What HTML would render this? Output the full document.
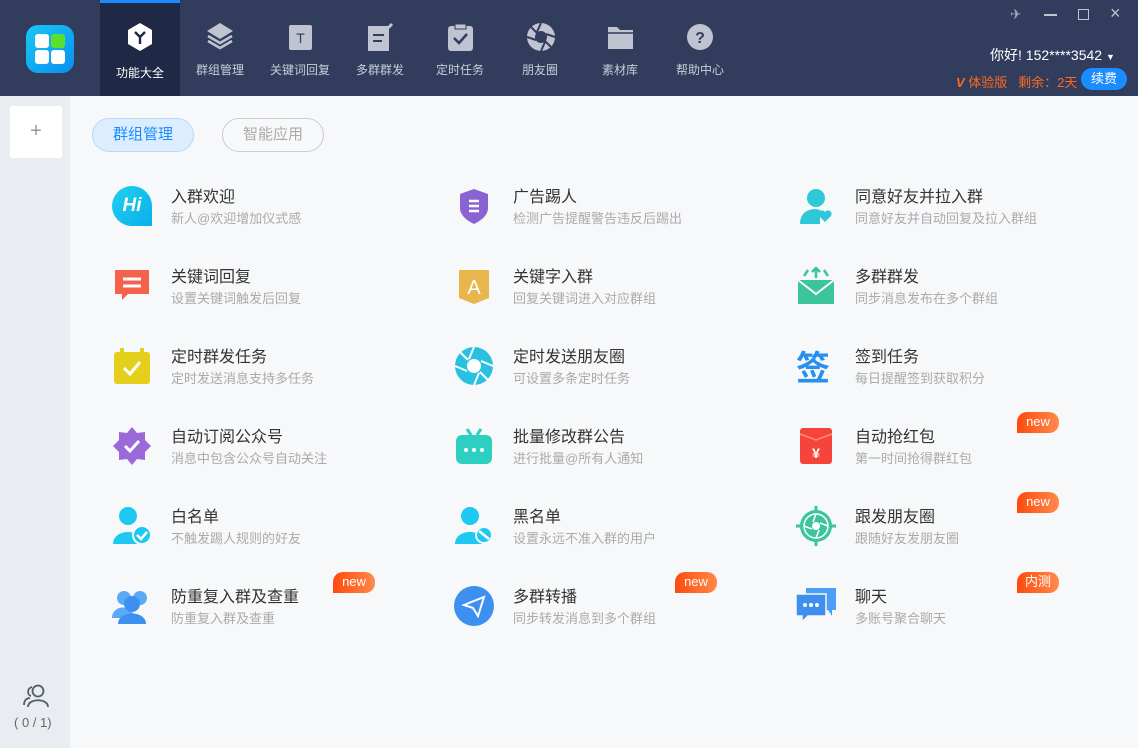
<!DOCTYPE html>
<html><head><meta charset="utf-8"><style>
*{margin:0;padding:0;box-sizing:border-box}
body{width:1138px;height:748px;overflow:hidden;font-family:"Liberation Sans","Noto Sans CJK SC",sans-serif;background:#f7f8fa;position:relative}
.hdr{position:absolute;left:0;top:0;width:1138px;height:96px;background:#323d5e}
.logo{position:absolute;left:26px;top:25px;width:48px;height:48px;border-radius:12px;background:linear-gradient(135deg,#19c8f5,#0a8ef0)}
.logo i{position:absolute;width:14px;height:14px;background:#fff;border-radius:3px}
.tab{position:absolute;top:0;width:80px;height:96px;color:#c9cdd8;font-size:12px;text-align:center}
.tab.act{background:#1f2844;color:#fff;border-top:3px solid #1a8cff}
.tab span{position:absolute;left:0;right:0;top:61px}
.tab svg{position:absolute;left:25px;top:21px}
.act svg{top:18px}
.side{position:absolute;left:0;top:96px;width:70px;height:652px;background:#e9edf2}
.plus{position:absolute;left:10px;top:106px;width:52px;height:52px;background:#fff;border-radius:3px;color:#999;font-size:20px;text-align:center;line-height:50px}
.pill{position:absolute;top:118px;height:34px;width:102px;border-radius:17px;font-size:15px;text-align:center;line-height:32px}
.it{position:absolute;width:300px;height:60px}
.it .t{position:absolute;left:59px;top:-13px;font-size:16px;color:#333}
.it .s{position:absolute;left:59px;top:12px;font-size:13px;color:#aaa}
.it .ic{position:absolute;left:0;top:-10px;width:40px;height:40px}
.bd{position:absolute;width:42px;height:21px;border-radius:10px 10px 10px 0;background:linear-gradient(90deg,#ff4a0f,#ff8a4a);color:#fff;font-size:13px;text-align:center;line-height:20px}
</style></head><body>
<div class="hdr">
<div class="logo"><i style="left:9px;top:9px"></i><i style="left:25px;top:9px;background:#5be02d"></i><i style="left:9px;top:25px"></i><i style="left:25px;top:25px"></i></div>
<div class="tab act" style="left:100px"><svg width="30" height="32" viewBox="0 0 30 32"><path d="M15 2 L27 9 V23 L15 30 L3 23 V9Z" fill="#fff"/><path d="M10 11 L15 16 L20 11 M15 16 V23" stroke="#1f2844" stroke-width="2.4" fill="none"/></svg><span>功能大全</span></div>
<div class="tab" style="left:180px"><svg width="30" height="32" viewBox="0 0 30 32"><path d="M15 2 L28 10 L15 18 L2 10Z" fill="#c0c4d0"/><path d="M3 15 L15 22 L27 15 M3 20 L15 27 L27 20" stroke="#c0c4d0" stroke-width="2.5" fill="none"/></svg><span>群组管理</span></div>
<div class="tab" style="left:260px"><svg width="30" height="32" viewBox="0 0 30 32"><rect x="4" y="4" width="23" height="25" rx="2" fill="#c0c4d0"/><text x="15.5" y="22" font-size="14" text-anchor="middle" fill="#323d5e" font-family="Liberation Sans">T</text></svg><span>关键词回复</span></div>
<div class="tab" style="left:340px"><svg width="30" height="32" viewBox="0 0 30 32"><rect x="3" y="5" width="21" height="25" fill="#c0c4d0"/><path d="M8 14h11M8 20h9" stroke="#323d5e" stroke-width="2"/><path d="M20 10 L27 3" stroke="#c0c4d0" stroke-width="3"/></svg><span>多群群发</span></div>
<div class="tab" style="left:420px"><svg width="30" height="32" viewBox="0 0 30 32"><rect x="3" y="5" width="25" height="25" rx="3" fill="#c0c4d0"/><rect x="10" y="3" width="11" height="5" fill="#c0c4d0" stroke="#323d5e"/><path d="M9 17 L14 22 L22 13" stroke="#323d5e" stroke-width="2.5" fill="none"/></svg><span>定时任务</span></div>
<div class="tab" style="left:500px"><svg width="32" height="32" viewBox="0 0 32 32"><circle cx="16" cy="16" r="14" fill="#c0c4d0"/><circle cx="16" cy="16" r="6" fill="#323d5e"/><path d="M16 2 L12 11 M30 16 L21 13 M16 30 L20 21 M2 16 L11 19 M6 6 L12 12 M26 26 L20 20" stroke="#323d5e" stroke-width="2"/></svg><span>朋友圈</span></div>
<div class="tab" style="left:580px"><svg width="30" height="32" viewBox="0 0 30 32"><path d="M3 6 H12 L15 9 H28 V28 H3Z" fill="#c0c4d0"/><path d="M3 12 H28" stroke="#323d5e" stroke-width="1.5"/></svg><span>素材库</span></div>
<div class="tab" style="left:660px"><svg width="30" height="32" viewBox="0 0 30 32"><circle cx="15" cy="16" r="13" fill="#c0c4d0"/><text x="15" y="22" font-size="16" font-weight="bold" text-anchor="middle" fill="#323d5e" font-family="Liberation Sans">?</text></svg><span>帮助中心</span></div>
<div style="position:absolute;left:1010px;top:6px;color:#a0a6b8;font-size:14px">✈</div>
<div style="position:absolute;left:1044px;top:14px;width:13px;height:1.5px;background:#c0c4d0"></div>
<div style="position:absolute;left:1078px;top:9px;width:11px;height:11px;border:1.5px solid #c0c4d0"></div>
<div style="position:absolute;left:1110px;top:3px;color:#c0c4d0;font-size:18px">×</div>
<div style="position:absolute;left:990px;top:45px;color:#fff;font-size:14px">你好! 152****3542 <span style="font-size:9px">▼</span></div>
<div style="position:absolute;left:956px;top:72px;color:#ff6a1a;font-size:13px"><b style="font-style:italic">V</b> 体验版 &nbsp; 剩余：2天</div>
<div style="position:absolute;left:1081px;top:68px;width:46px;height:22px;border-radius:11px;background:#1a8cff;color:#fff;font-size:13px;text-align:center;line-height:22px">续费</div>
</div>
<div class="side"></div>
<div class="plus">+</div>
<svg style="position:absolute;left:22px;top:683px" width="28" height="26" viewBox="0 0 28 26"><circle cx="16" cy="8" r="5.5" fill="none" stroke="#555c6a" stroke-width="1.8"/><path d="M6 24 C6 15 26 15 26 24" fill="none" stroke="#555c6a" stroke-width="1.8"/><path d="M10 4 C5 5 5 12 9 13 M2 22 C2 17 5 15 8 15" fill="none" stroke="#555c6a" stroke-width="1.8"/></svg>
<div style="position:absolute;left:14px;top:715px;font-size:13px;color:#666">( 0 / 1)</div>
<div class="pill" style="left:92px;background:#dceefd;border:1px solid #b7dafc;color:#1a8cff">群组管理</div>
<div class="pill" style="left:222px;border:1px solid #ccc;color:#aaa">智能应用</div>

<div class="it" style="left:112px;top:196px"><div class="ic"><div style="width:40px;height:40px;border-radius:50% 50% 0 50%;background:linear-gradient(135deg,#1ed0f0,#0ab0ea);color:#fff;font-weight:bold;font-style:italic;font-size:19px;text-align:center;line-height:40px">Hi</div></div><div class="t">入群欢迎</div><div class="s">新人@欢迎增加仪式感</div></div>
<div class="it" style="left:454px;top:196px"><div class="ic"><svg width="40" height="40"><path d="M20 3 L34 8 V22 C34 30 26 35 20 38 C14 35 6 30 6 22 V8Z" fill="#8a63d2"/><path d="M15 15h10M15 20h10M15 25h10" stroke="#fff" stroke-width="2.5"/></svg></div><div class="t">广告踢人</div><div class="s">检测广告提醒警告违反后踢出</div></div>
<div class="it" style="left:796px;top:196px"><div class="ic"><svg width="40" height="40"><circle cx="20" cy="12" r="9" fill="#2fc8d8"/><path d="M4 38 C4 22 20 22 24 24 L24 38Z" fill="#2fc8d8"/><path d="M29 36 L23 30 A3.5 3.5 0 0 1 29 26 A3.5 3.5 0 0 1 35 30Z" fill="#2fc8d8"/></svg></div><div class="t">同意好友并拉入群</div><div class="s">同意好友并自动回复及拉入群组</div></div>

<div class="it" style="left:112px;top:276px"><div class="ic"><svg width="40" height="40"><path d="M3 4 H37 V28 H16 L10 34 V28 H3Z" fill="#f4624c"/><path d="M11 13h18M11 20h18" stroke="#fff" stroke-width="3"/></svg></div><div class="t">关键词回复</div><div class="s">设置关键词触发后回复</div></div>
<div class="it" style="left:454px;top:276px"><div class="ic"><svg width="40" height="40"><path d="M5 4 H35 V32 L20 38 L5 32Z" fill="#e8b64a"/><text x="20" y="28" font-size="20" text-anchor="middle" fill="#fff" font-family="Liberation Sans">A</text></svg></div><div class="t">关键字入群</div><div class="s">回复关键词进入对应群组</div></div>
<div class="it" style="left:796px;top:276px"><div class="ic"><svg width="40" height="40"><rect x="2" y="14" width="36" height="24" fill="#3cc49a"/><path d="M2 14 L20 28 L38 14" stroke="#fff" stroke-width="2" fill="none"/><path d="M20 2 V12 M16 6 L20 2 L24 6 M8 10 L12 4 M32 10 L28 4" stroke="#3cc49a" stroke-width="2.5" fill="none"/></svg></div><div class="t">多群群发</div><div class="s">同步消息发布在多个群组</div></div>

<div class="it" style="left:112px;top:356px"><div class="ic"><svg width="40" height="40"><rect x="2" y="6" width="36" height="32" rx="3" fill="#e4cf1a"/><path d="M10 2v8M30 2v8" stroke="#e4cf1a" stroke-width="4"/><path d="M12 22 L18 28 L28 16" stroke="#fff" stroke-width="3" fill="none"/></svg></div><div class="t">定时群发任务</div><div class="s">定时发送消息支持多任务</div></div>
<div class="it" style="left:454px;top:356px"><div class="ic"><svg width="40" height="40"><circle cx="20" cy="20" r="19" fill="#28c2e0"/><circle cx="20" cy="20" r="7" fill="#fff"/><path d="M20 1 L15 13 M39 20 L27 15 M20 39 L25 27 M1 20 L13 25 M6 6 L14 14 M34 34 L26 26" stroke="#fff" stroke-width="2"/></svg></div><div class="t">定时发送朋友圈</div><div class="s">可设置多条定时任务</div></div>
<div class="it" style="left:796px;top:356px"><div class="ic"><div style="color:#2590f0;font-size:34px;font-weight:bold;line-height:40px;font-family:'Noto Sans CJK SC',sans-serif">签</div></div><div class="t">签到任务</div><div class="s">每日提醒签到获取积分</div></div>

<div class="it" style="left:112px;top:436px"><div class="ic"><svg width="40" height="40"><path d="M20 1 L25 7 L33 6 L33 14 L39 20 L33 26 L33 34 L25 33 L20 39 L15 33 L7 34 L7 26 L1 20 L7 14 L7 6 L15 7Z" fill="#9a6ad8"/><path d="M13 20 L18 25 L27 15" stroke="#fff" stroke-width="3" fill="none"/></svg></div><div class="t">自动订阅公众号</div><div class="s">消息中包含公众号自动关注</div></div>
<div class="it" style="left:454px;top:436px"><div class="ic"><svg width="40" height="40"><rect x="2" y="9" width="36" height="29" rx="6" fill="#2ccfc0"/><path d="M13 3 L17 9 M27 3 L23 9" stroke="#2ccfc0" stroke-width="3"/><circle cx="12" cy="24" r="2" fill="#fff"/><circle cx="20" cy="24" r="2" fill="#fff"/><circle cx="28" cy="24" r="2" fill="#fff"/></svg></div><div class="t">批量修改群公告</div><div class="s">进行批量@所有人通知</div></div>
<div class="it" style="left:796px;top:436px"><div class="ic"><svg width="40" height="40"><rect x="4" y="2" width="32" height="36" rx="3" fill="#f4443c"/><path d="M4 8 L20 14 L36 8" stroke="#ff8a80" stroke-width="1.5" fill="none"/><text x="20" y="32" font-size="14" font-weight="bold" text-anchor="middle" fill="#fff" font-family="Liberation Sans">¥</text></svg></div><div class="t">自动抢红包</div><div class="s">第一时间抢得群红包</div></div>

<div class="it" style="left:112px;top:516px"><div class="ic"><svg width="40" height="40"><circle cx="16" cy="10" r="9" fill="#1ec8f0"/><path d="M1 38 C1 22 31 22 31 38Z" fill="#1ec8f0"/><circle cx="30" cy="29" r="9" fill="#1ec8f0" stroke="#f7f8fa" stroke-width="2"/><path d="M25 29 L29 33 L35 26" stroke="#fff" stroke-width="2.5" fill="none"/></svg></div><div class="t">白名单</div><div class="s">不触发踢人规则的好友</div></div>
<div class="it" style="left:454px;top:516px"><div class="ic"><svg width="40" height="40"><circle cx="16" cy="10" r="9" fill="#1ec8f0"/><path d="M1 38 C1 22 31 22 31 38Z" fill="#1ec8f0"/><circle cx="30" cy="29" r="8" fill="#1ec8f0" stroke="#f7f8fa" stroke-width="2"/><path d="M25 25 L35 33" stroke="#fff" stroke-width="2.5"/></svg></div><div class="t">黑名单</div><div class="s">设置永远不准入群的用户</div></div>
<div class="it" style="left:796px;top:516px"><div class="ic"><svg width="40" height="40"><circle cx="20" cy="20" r="16" fill="#3cc49a"/><path d="M20 0v6M20 34v6M0 20h6M34 20h6" stroke="#3cc49a" stroke-width="3"/><circle cx="20" cy="20" r="12" fill="none" stroke="#fff" stroke-width="1.5"/><circle cx="20" cy="20" r="4" fill="#fff"/><path d="M20 8 L17 16 M32 20 L24 17 M20 32 L23 24 M8 20 L16 23" stroke="#fff" stroke-width="1.5"/></svg></div><div class="t">跟发朋友圈</div><div class="s">跟随好友发朋友圈</div></div>

<div class="it" style="left:112px;top:596px"><div class="ic"><svg width="40" height="40"><circle cx="12" cy="12" r="7" fill="#5aaaf5"/><circle cx="28" cy="12" r="7" fill="#5aaaf5"/><path d="M0 32 C0 18 22 18 22 32Z" fill="#5aaaf5"/><circle cx="20" cy="18" r="8" fill="#3d8ff0"/><path d="M6 38 C6 24 34 24 34 38Z" fill="#3d8ff0"/></svg></div><div class="t">防重复入群及查重</div><div class="s">防重复入群及查重</div></div>
<div class="it" style="left:454px;top:596px"><div class="ic"><svg width="40" height="40"><circle cx="20" cy="20" r="20" fill="#3d8ff0"/><path d="M10 19 L30 11 L24 30 L19 22Z" fill="none" stroke="#fff" stroke-width="2"/></svg></div><div class="t">多群转播</div><div class="s">同步转发消息到多个群组</div></div>
<div class="it" style="left:796px;top:596px"><div class="ic"><svg width="40" height="40"><path d="M10 2 H40 V24 H36 V30 L32 24 H10Z" fill="#4ba0f5"/><path d="M0 8 H30 V30 H12 L6 36 V30 H0Z" fill="#3d8ff0" stroke="#f7f8fa" stroke-width="1.5"/><circle cx="9" cy="19" r="2" fill="#fff"/><circle cx="15" cy="19" r="2" fill="#fff"/><circle cx="21" cy="19" r="2" fill="#fff"/></svg></div><div class="t">聊天</div><div class="s">多账号聚合聊天</div></div>

<div class="bd" style="left:1017px;top:412px">new</div>
<div class="bd" style="left:1017px;top:492px">new</div>
<div class="bd" style="left:1017px;top:572px">内测</div>
<div class="bd" style="left:675px;top:572px">new</div>
<div class="bd" style="left:333px;top:572px">new</div>
</body></html>
